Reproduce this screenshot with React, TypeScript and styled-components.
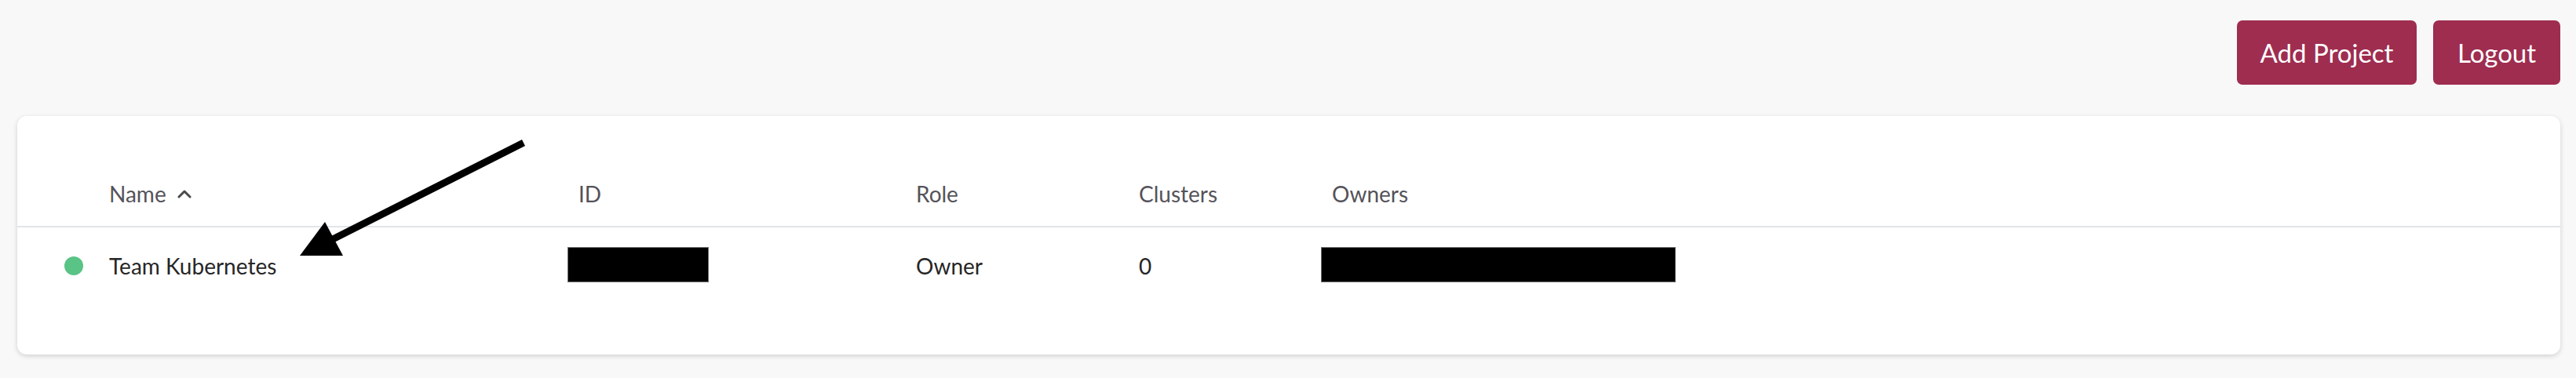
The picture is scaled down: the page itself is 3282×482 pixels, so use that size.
import React from "react";
import styled, { createGlobalStyle } from "styled-components";

const GlobalStyle = createGlobalStyle`
  html, body {
    margin: 0;
    padding: 0;
    background: #f8f8f8;
  }
  body {
    font-family: "Lato", "Noto Sans", sans-serif;
  }
`;

const Page = styled.div`
  position: relative;
  padding: 26px 20px 30px 22px;
  background: #f8f8f8;
  min-height: 482px;
  box-sizing: border-box;
`;

const TopBar = styled.div`
  display: flex;
  justify-content: flex-end;
  gap: 21px;
`;

const Button = styled.button<{ $width: number }>`
  width: ${(p) => p.$width}px;
  height: 82px;
  border: none;
  border-radius: 7px;
  background: #9e2d50;
  color: #ffffff;
  font-family: "Lato", "Noto Sans", sans-serif;
  font-size: 33px;
  font-weight: 400;
  padding: 0;
  cursor: pointer;
`;

const Card = styled.div`
  margin-top: 40px;
  height: 304px;
  box-sizing: border-box;
  background: #ffffff;
  border-radius: 12px;
  box-shadow: 0 2px 6px rgba(0, 0, 0, 0.16);
`;

const Row = styled.div<{ $header?: boolean }>`
  display: grid;
  grid-template-columns: 117px 598px 430px 284px 246px 1fr;
  align-items: center;
  padding: ${(p) => (p.$header ? "79px 0 21px" : "28px 0")};
  border-bottom: ${(p) => (p.$header ? "2px solid #e1e5e9" : "none")};
  font-size: 28px;
  line-height: 40px;
  color: ${(p) => (p.$header ? "#55535a" : "#262626")};
`;

const Cell = styled.div`
  display: flex;
  align-items: center;
  white-space: nowrap;
`;

const StatusCell = styled(Cell)`
  padding-left: 60px;
`;

const Dot = styled.span`
  width: 24px;
  height: 24px;
  border-radius: 50%;
  background: #5ac386;
`;

const SortIcon = styled.svg`
  margin-left: 14px;
  width: 18px;
  height: 12px;
`;

const Redacted = styled.span<{ $width: number }>`
  display: block;
  width: ${(p) => p.$width}px;
  height: 45px;
  margin-left: -14px;
  margin-top: -3px;
  box-sizing: border-box;
  background: #000000;
  border: 1px solid #6e6e6e;
`;

const Annotation = styled.svg`
  position: absolute;
  left: 0;
  top: 0;
  pointer-events: none;
`;

export default function App() {
  return (
    <>
      <GlobalStyle />
      <Page>
        <TopBar>
          <Button $width={229}>Add Project</Button>
          <Button $width={162}>Logout</Button>
        </TopBar>
        <Card>
          <Row $header>
            <Cell />
            <Cell>
              Name
              <SortIcon viewBox="0 0 18 12">
                <polyline
                  points="2,10 9,3 16,10"
                  fill="none"
                  stroke="#4a4a4a"
                  strokeWidth="3"
                  strokeLinecap="round"
                  strokeLinejoin="round"
                />
              </SortIcon>
            </Cell>
            <Cell>ID</Cell>
            <Cell>Role</Cell>
            <Cell>Clusters</Cell>
            <Cell>Owners</Cell>
          </Row>
          <Row>
            <StatusCell>
              <Dot />
            </StatusCell>
            <Cell>Team Kubernetes</Cell>
            <Cell>
              <Redacted $width={180} />
            </Cell>
            <Cell>Owner</Cell>
            <Cell>0</Cell>
            <Cell>
              <Redacted $width={452} />
            </Cell>
          </Row>
        </Card>
        <Annotation width="700" height="350" viewBox="0 0 700 350">
          <line x1="667" y1="182" x2="424" y2="305" stroke="#000" strokeWidth="9" />
          <polygon points="382,326 414,283 437,326" fill="#000" />
        </Annotation>
      </Page>
    </>
  );
}
